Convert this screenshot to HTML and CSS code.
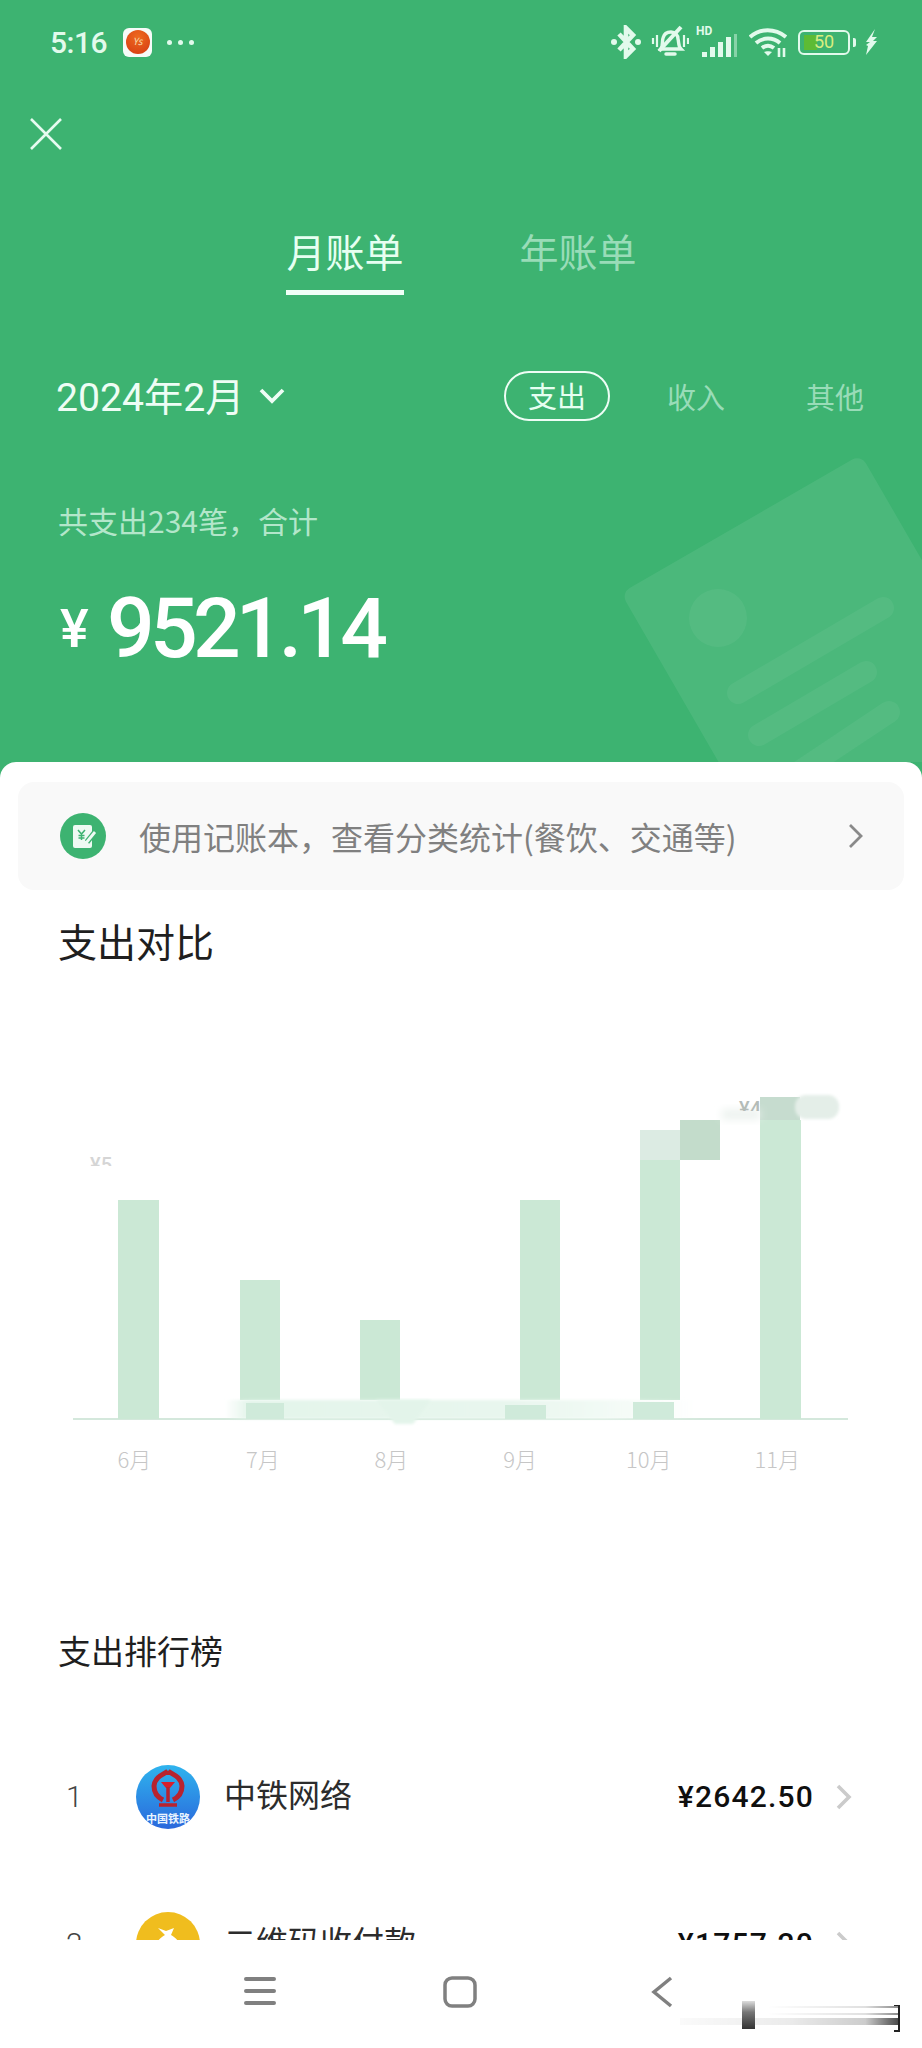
FILE: index.html
```html
<!DOCTYPE html>
<html lang="zh-CN">
<head>
<meta charset="UTF-8">
<meta name="viewport" content="width=device-width, initial-scale=1.0">
<title>月账单</title>
<link rel="stylesheet" href="styles.css">
</head>
<body>
<div class="screen">

  <header class="top">
    <svg class="receipt" width="922" height="762" viewBox="0 0 922 762">
      <rect x="621" y="593" width="277" height="420" rx="10" transform="rotate(-30 621 593)" fill="#fff" fill-opacity="0.075"/>
      <circle cx="718" cy="618" r="29" fill="#fff" fill-opacity="0.05"/>
      <g stroke="#fff" stroke-opacity="0.05" stroke-width="22" stroke-linecap="round">
        <path d="M738 693L883 608"/>
        <path d="M759 735L866 672"/>
        <path d="M790 778L889 712"/>
      </g>
    </svg>

    <div class="statusbar">
      <div class="status-left">
        <span class="clock">5:16</span>
        <span class="appicon"><span class="appicon-dot">Ys</span></span>
        <span class="dots"><i></i><i></i><i></i></span>
      </div>
      <div class="status-right">
        <svg width="30" height="34" viewBox="0 0 30 34"><path d="M8 9l14 15-7 7V3l7 7L8 25" fill="none" stroke="#e2faec" stroke-width="4.600"/><circle cx="3" cy="17" r="3" fill="#e2faec"/><circle cx="27" cy="17" r="3" fill="#e2faec"/></svg>
        <svg width="38" height="34" viewBox="0 0 38 34" fill="none" stroke="#e2faec" stroke-width="3.400"><path d="M10 24c2-3 1-8 2-11 1-4 4-6 8-6s7 3 7 7c1 3 0 7 3 10z"/><path d="M15 29h9" stroke-width="3.500" stroke-linecap="round"/><path d="M30 2L8 26" stroke-width="4"/><path d="M2 13v6M6 10v12M33 10v12M37 13v6" stroke-width="2.200"/></svg>
        <span class="signal">
          <span class="hd">HD</span>
          <svg width="36" height="24" viewBox="0 0 36 24"><g fill="#e2faec"><rect x="0" y="18" width="5" height="5"/><rect x="8" y="13" width="5" height="10"/><rect x="16" y="8" width="5" height="15"/><rect x="24" y="3" width="5" height="20"/></g><rect x="32" y="0" width="3" height="23" fill="#e2faec" fill-opacity="0.45"/></svg>
        </span>
        <svg width="38" height="30" viewBox="0 0 38 30" fill="none" stroke="#e2faec" stroke-width="4"><path d="M1 10c10-9 25-9 36 0"/><path d="M7 16c7-6 17-6 24 0"/><path d="M13 21c4-3 8-3 12 0"/><path d="M19 29l-4-4c2-1 6-1 8 0z" fill="#e2faec" stroke="none"/><path d="M30 21v9M35 21v9" stroke-width="2.600"/></svg>
        <span class="battery"><span class="battery-fill"></span><span class="battery-num">50</span></span>
        <span class="battery-cap"></span>
        <svg class="bolt" width="13" height="26" viewBox="0 0 13 26"><path d="M10 0L1 13h4l-4 3 2 1-2 9 11-14H8l4-4H7z" fill="#e2faec"/></svg>
      </div>
    </div>

    <svg class="close" width="32" height="32" viewBox="0 0 32 32"><path d="M1 1l30 30M31 1L1 31" stroke="#e6fbf0" stroke-width="2.600"/></svg>

    <nav class="tabs">
      <span class="tab tab-active">月账单</span>
      <span class="tab">年账单</span>
    </nav>

    <div class="filters">
      <div class="month">
        <span class="month-label">2024年2月</span>
        <svg width="26" height="16" viewBox="0 0 26 16"><path d="M2 2l11 11L24 2" fill="none" stroke="#eefdf5" stroke-width="3.800"/></svg>
      </div>
      <div class="kinds">
        <span class="kind kind-active">支出</span>
        <span class="kind kind-in">收入</span>
        <span class="kind kind-other">其他</span>
      </div>
    </div>

    <p class="summary">共支出234笔，合计</p>
    <div class="total"><span class="yen">¥</span><span class="amount">9521.14</span></div>
  </header>

  <main class="card">
    <div class="banner">
      <svg class="banner-icon" width="46" height="46" viewBox="0 0 46 46">
        <circle cx="23" cy="23" r="23" fill="#3db371"/>
        <rect x="13" y="12" width="19" height="23" rx="2" fill="#eefaf3"/>
        <path d="M18 17l3.500 4 3.500-4M21.500 21v6M18.500 22.500h6M18.500 25h6" fill="none" stroke="#3db371" stroke-width="1.500"/>
        <path d="M27 29l8-10" stroke="#3db371" stroke-width="5.500"/>
        <path d="M26 30l9-11" stroke="#eefaf3" stroke-width="2.800"/>
      </svg>
      <span class="banner-text">使用记账本，查看分类统计(餐饮、交通等)</span>
      <svg width="16" height="26" viewBox="0 0 16 26"><path d="M2 2l11 11L2 24" fill="none" stroke="#8a8a8a" stroke-width="2.800"/></svg>
    </div>

    <h2 class="section-title">支出对比</h2>

    <svg class="chart" width="922" height="465" viewBox="0 965 922 465">
      <defs>
        <filter id="soft" x="-20%" y="-60%" width="140%" height="220%"><feGaussianBlur stdDeviation="4"/></filter>
        <filter id="softer" x="-5%" y="-30%" width="110%" height="160%"><feGaussianBlur stdDeviation="1.500"/></filter>
        <linearGradient id="band">
          <stop offset="0" stop-color="#e3f4ea" stop-opacity="0"/>
          <stop offset="0.05" stop-color="#e3f4ea"/>
          <stop offset="0.6" stop-color="#e8f6ee"/>
          <stop offset="0.8" stop-color="#f2faf5"/>
          <stop offset="1" stop-color="#f2faf5" stop-opacity="0"/>
        </linearGradient>
        <clipPath id="cut-five"><rect x="85" y="1150" width="60" height="16"/></clipPath>
        <clipPath id="cut-four"><rect x="730" y="1090" width="50" height="21"/></clipPath>
      </defs>
      <rect x="73" y="1418" width="775" height="2" fill="#d4e8dc"/>
      <text x="90" y="1172" class="bar-value" clip-path="url(#cut-five)">¥5</text>

      <g fill="#cbe8d5">
        <rect x="118" y="1200" width="41" height="219"/>
        <rect x="240" y="1280" width="40" height="120"/>
        <rect x="360" y="1320" width="40" height="80"/>
        <rect x="520" y="1200" width="40" height="200"/>
        <rect x="640" y="1160" width="40" height="240"/>
        <rect x="760" y="1120" width="41" height="299"/>
      </g>

      <rect x="225" y="1400" width="475" height="19" fill="url(#band)" filter="url(#softer)"/>
      <g fill="#cfeada">
        <rect x="246" y="1403" width="38" height="16"/>
        <rect x="505" y="1405" width="41" height="14"/>
        <rect x="633" y="1402" width="41" height="17"/>
      </g>
      <path d="M376 1400h55l-18 24h-18z" fill="#e3f4ea" filter="url(#softer)"/>

      <rect x="640" y="1130" width="40" height="30" fill="#dcebe3"/>
      <rect x="680" y="1120" width="40" height="40" fill="#c3dccb"/>
      <rect x="760" y="1097" width="40" height="23" fill="#c6dccf"/>
      <rect x="795" y="1095" width="44" height="24" rx="11" fill="#e4eee8" filter="url(#softer)"/>
      <rect x="722" y="1110" width="38" height="9" fill="#eaf1ed" filter="url(#soft)"/>
      <text x="739" y="1116" class="bar-value bar-value-dark" clip-path="url(#cut-four)">¥4</text>
    </svg>

    <div class="months">
      <span>6月</span><span>7月</span><span>8月</span><span>9月</span><span>10月</span><span>11月</span>
    </div>

    <h2 class="section-title section-rank">支出排行榜</h2>

    <div class="rank-row rank-first">
      <span class="rank-no">1</span>
      <span class="logo logo-rail">
        <svg width="34" height="42" viewBox="0 0 34 42" fill="none" stroke="#b8232f" stroke-width="5">
          <path d="M17 3C14 6 4 8 3 18c0 8 5 12 9 14M17 3c3 3 13 5 14 15 0 8-5 12-9 14"/>
          <path d="M10 14h14l-5 6h-4z" fill="#d81e2c" stroke="none"/>
          <path d="M17 19v15M8 37h18" stroke-width="3.500"/>
        </svg>
        <span class="logo-rail-name">中国铁路</span>
      </span>
      <span class="rank-name">中铁网络</span>
      <span class="rank-amount">¥2642.50</span>
      <svg class="rank-arrow" width="16" height="26" viewBox="0 0 16 26"><path d="M2 2l11 11L2 24" fill="none" stroke="#cbcbcb" stroke-width="3.600"/></svg>
    </div>

    <div class="rank-row">
      <span class="rank-no">2</span>
      <span class="logo logo-qr">
        <svg width="64" height="64" viewBox="0 0 64 64"><path d="M22 16l8 3 8-3-3 7c6 3 11 10 11 17 0 8-6 12-14 12s-14-4-14-12c0-7 5-14 11-17z" fill="#fff"/></svg>
      </span>
      <span class="rank-name">二维码收付款</span>
      <span class="rank-amount">¥1757.20</span>
      <svg class="rank-arrow" width="16" height="26" viewBox="0 0 16 26"><path d="M2 2l11 11L2 24" fill="none" stroke="#cbcbcb" stroke-width="3.600"/></svg>
    </div>
  </main>

  <footer class="navbar">
    <svg width="32" height="30" viewBox="0 0 32 30"><path d="M2 3h28M2 15h28M2 27h28" stroke="#808080" stroke-width="4" stroke-linecap="round"/></svg>
    <svg width="34" height="32" viewBox="0 0 34 32"><rect x="2" y="2" width="30" height="28" rx="7" fill="none" stroke="#808080" stroke-width="3.500"/></svg>
    <svg width="22" height="32" viewBox="0 0 22 32"><path d="M20 2L3 16l17 14" fill="none" stroke="#808080" stroke-width="3.500"/></svg>
    <span class="watermark"><i class="watermark-bar"></i><i class="watermark-end"></i></span>
  </footer>

</div>
</body>
</html>
```

FILE: styles.css
```css
html, body, div, h2, p, span, nav, header, main, footer {
  margin: 0;
  padding: 0;
  box-sizing: border-box;
}

body {
  background-color: #fff;
  font-family: "Noto Sans CJK SC", "Noto Sans", sans-serif;
}

.screen {
  width: 922px;
  height: 2048px;
  overflow: hidden;
  background-color: #3db371;
}

/* green top part */
.top {
  position: relative;
  height: 762px;
  overflow: hidden;
  color: #eefdf5;
}

.receipt {
  position: absolute;
  top: 0;
  left: 0;
}

.statusbar {
  position: relative;
  display: flex;
  justify-content: space-between;
  align-items: center;
  height: 84px;
  padding: 0 44px 0 50px;
  color: #e2faec;
}

.status-left {
  display: flex;
  align-items: center;
}

.clock {
  font-family: Roboto, sans-serif;
  font-size: 30px;
  font-weight: 500;
  letter-spacing: -0.5px;
}

.appicon {
  display: flex;
  align-items: center;
  justify-content: center;
  width: 29px;
  height: 29px;
  margin-left: 16px;
  border-radius: 6px;
  background-color: #f6fbf8;
}

.appicon-dot {
  display: block;
  width: 24px;
  height: 24px;
  border-radius: 50%;
  background: radial-gradient(circle at 50% 30%, #ee6a1f, #d43a12);
  color: #f7d9a8;
  font-size: 10px;
  line-height: 21px;
  text-align: center;
  font-style: italic;
}

.dots {
  display: flex;
  gap: 6px;
  margin-left: 15px;
}

.dots i {
  width: 5px;
  height: 5px;
  border-radius: 50%;
  background-color: #e2faec;
}

.status-right {
  display: flex;
  align-items: center;
}

.status-right svg {
  display: block;
}

.status-right > svg:nth-child(2) {
  margin-left: 10px;
}

.signal {
  position: relative;
  display: block;
  width: 44px;
  height: 34px;
  margin-left: 7px;
}

.signal svg {
  position: absolute;
  right: 2px;
  bottom: 1px;
}

.hd {
  position: absolute;
  top: -1px;
  left: 0;
  font-family: Roboto, sans-serif;
  font-size: 12px;
  font-weight: 700;
}

.status-right > svg:nth-child(4) {
  margin-left: 9px;
}

.battery {
  position: relative;
  display: block;
  width: 52px;
  height: 25px;
  margin-left: 11px;
  border: 2.5px solid #e2faec;
  border-radius: 6px;
}

.battery-fill {
  position: absolute;
  top: 3px;
  left: 4px;
  bottom: 3px;
  width: 13px;
  background-color: #5dbb34;
}

.battery-num {
  position: absolute;
  top: 0;
  left: 0;
  right: 0;
  font-family: Roboto, sans-serif;
  font-size: 18px;
  line-height: 20px;
  text-align: center;
  color: #d9ee7d;
}

.battery-cap {
  width: 3px;
  height: 9px;
  margin-left: 3px;
  background-color: #e2faec;
  border-radius: 0 2px 2px 0;
}

.bolt {
  margin-left: 9px;
}

.close {
  position: relative;
  display: block;
  margin: 34px 0 0 30px;
}

.tabs {
  position: relative;
  display: flex;
  gap: 115px;
  margin: 72px 0 0 286px;
}

.tab {
  display: block;
  height: 73px;
  width: 118px;
  border-bottom: 5px solid transparent;
  font-size: 39px;
  line-height: 56px;
  text-align: center;
  color: #99dcb8;
}

.tab-active {
  color: #e6fff1;
  border-bottom-color: #f0fff7;
}

.filters {
  position: relative;
  display: flex;
  justify-content: space-between;
  align-items: center;
  height: 50px;
  margin-top: 76px;
  padding: 0 58px 0 56px;
}

.month {
  display: flex;
  align-items: center;
  gap: 14px;
  font-family: Roboto, "Noto Sans CJK SC", sans-serif;
  font-size: 39.2px;
}

.month-label {
  padding-bottom: 5px;
}

.kinds {
  display: flex;
  align-items: center;
}

.kind {
  display: block;
  font-size: 29px;
  line-height: 44px;
  color: #99dcb8;
}

.kind-active {
  width: 106px;
  height: 50px;
  border: 2px solid #eefdf5;
  border-radius: 25px;
  text-align: center;
  color: #e6fff1;
}

.kind-in {
  margin-left: 57px;
}

.kind-other {
  margin-left: 81px;
}

.summary {
  position: relative;
  margin: 78px 0 0 58px;
  font-size: 30px;
  line-height: 42px;
  color: #b3e6ca;
}

.total {
  position: relative;
  display: flex;
  align-items: center;
  height: 100px;
  margin: 37px 0 0 60px;
  font-family: Roboto, sans-serif;
  font-weight: 500;
  color: #fff;
}

.yen {
  font-size: 54px;
  width: 47px;
}

.amount {
  font-size: 84px;
  letter-spacing: -4.8px;
}

/* white card */
.card {
  height: 1178px;
  overflow: hidden;
  padding-top: 20px;
  background-color: #fff;
  border-radius: 16px 16px 0 0;
}

.banner {
  display: flex;
  align-items: center;
  height: 108px;
  margin: 0 18px;
  padding: 0 40px 0 42px;
  background-color: #f9f9f9;
  border-radius: 16px;
}

.banner-text {
  flex: 1;
  margin-left: 33px;
  font-size: 32px;
  color: #808080;
  white-space: nowrap;
}

.section-title {
  margin: 25px 0 0 58px;
  font-size: 39px;
  font-weight: 400;
  line-height: 50px;
  color: #1f1f1f;
}

.chart {
  display: block;
}

.bar-value {
  font-family: Roboto, sans-serif;
  font-size: 20px;
  font-weight: 500;
  fill: #d5d5d5;
}

.bar-value-dark {
  fill: #b4bcb8;
}

.months {
  display: grid;
  grid-template-columns: repeat(6, 128.6px);
  height: 40px;
  margin-top: 8px;
  padding-left: 70px;
  font-size: 22px;
  font-weight: 300;
  line-height: 40px;
  text-align: center;
  color: #c6c6c6;
}

.section-rank {
  margin-top: 147px;
  font-size: 33px;
}

.rank-row {
  display: flex;
  align-items: center;
  height: 147px;
  padding: 0 70px 0 66px;
}

.rank-first {
  margin-top: 48px;
}

.rank-no {
  width: 70px;
  font-family: Roboto, sans-serif;
  font-size: 30px;
  font-weight: 300;
  color: #444;
}

.logo {
  position: relative;
  display: block;
  flex: none;
  width: 64px;
  height: 64px;
  overflow: hidden;
  border-radius: 50%;
}

.logo-rail {
  background: linear-gradient(#2fb4ee, #2a68dc);
}

.logo-rail svg {
  position: absolute;
  top: 3px;
  left: 15px;
}

.logo-rail-name {
  position: absolute;
  left: 0;
  right: 0;
  bottom: 5px;
  font-size: 11px;
  font-weight: 700;
  line-height: 12px;
  text-align: center;
  color: #e9f4ff;
}

.logo-qr {
  background-color: #f0bd1e;
}

.rank-name {
  flex: 1;
  margin-left: 24px;
  padding-bottom: 7px;
  font-size: 32px;
  color: #2c2c2c;
}

.rank-amount {
  font-family: Roboto, sans-serif;
  font-size: 30px;
  font-weight: 500;
  letter-spacing: 1.2px;
  color: #0f0f0f;
}

.rank-arrow {
  margin-left: 22px;
}

/* bottom navigation */
.navbar {
  position: relative;
  display: flex;
  align-items: flex-start;
  height: 108px;
  padding: 36px 0 0 244px;
  background-color: #fff;
}

.navbar svg:nth-child(2) {
  margin-left: 167px;
}

.navbar svg:nth-child(3) {
  margin-left: 174px;
}

.watermark {
  position: absolute;
  top: 65px;
  left: 680px;
  width: 218px;
  height: 24px;
  background:
    linear-gradient(to right, transparent 40%, rgba(0, 0, 0, 0.12) 85%, rgba(0, 0, 0, 0.45) 100%) 0 1px / 100% 2px no-repeat,
    linear-gradient(to right, transparent 40%, rgba(0, 0, 0, 0.12) 85%, rgba(0, 0, 0, 0.45) 100%) 0 8px / 100% 2px no-repeat,
    linear-gradient(to right, rgba(0, 0, 0, 0.02) 0, rgba(0, 0, 0, 0.08) 50%, rgba(0, 0, 0, 0.2) 85%, rgba(0, 0, 0, 0.7) 100%) 0 13px / 100% 7px no-repeat;
}

.watermark-bar {
  position: absolute;
  top: -4px;
  left: 62px;
  width: 13px;
  height: 28px;
  background: linear-gradient(to bottom, #ddd, #777 40%, #333);
}

.watermark-end {
  position: absolute;
  top: 0;
  right: -2px;
  width: 4px;
  height: 24px;
  border: solid #222;
  border-width: 1px 2px 2px 0;
}
```
